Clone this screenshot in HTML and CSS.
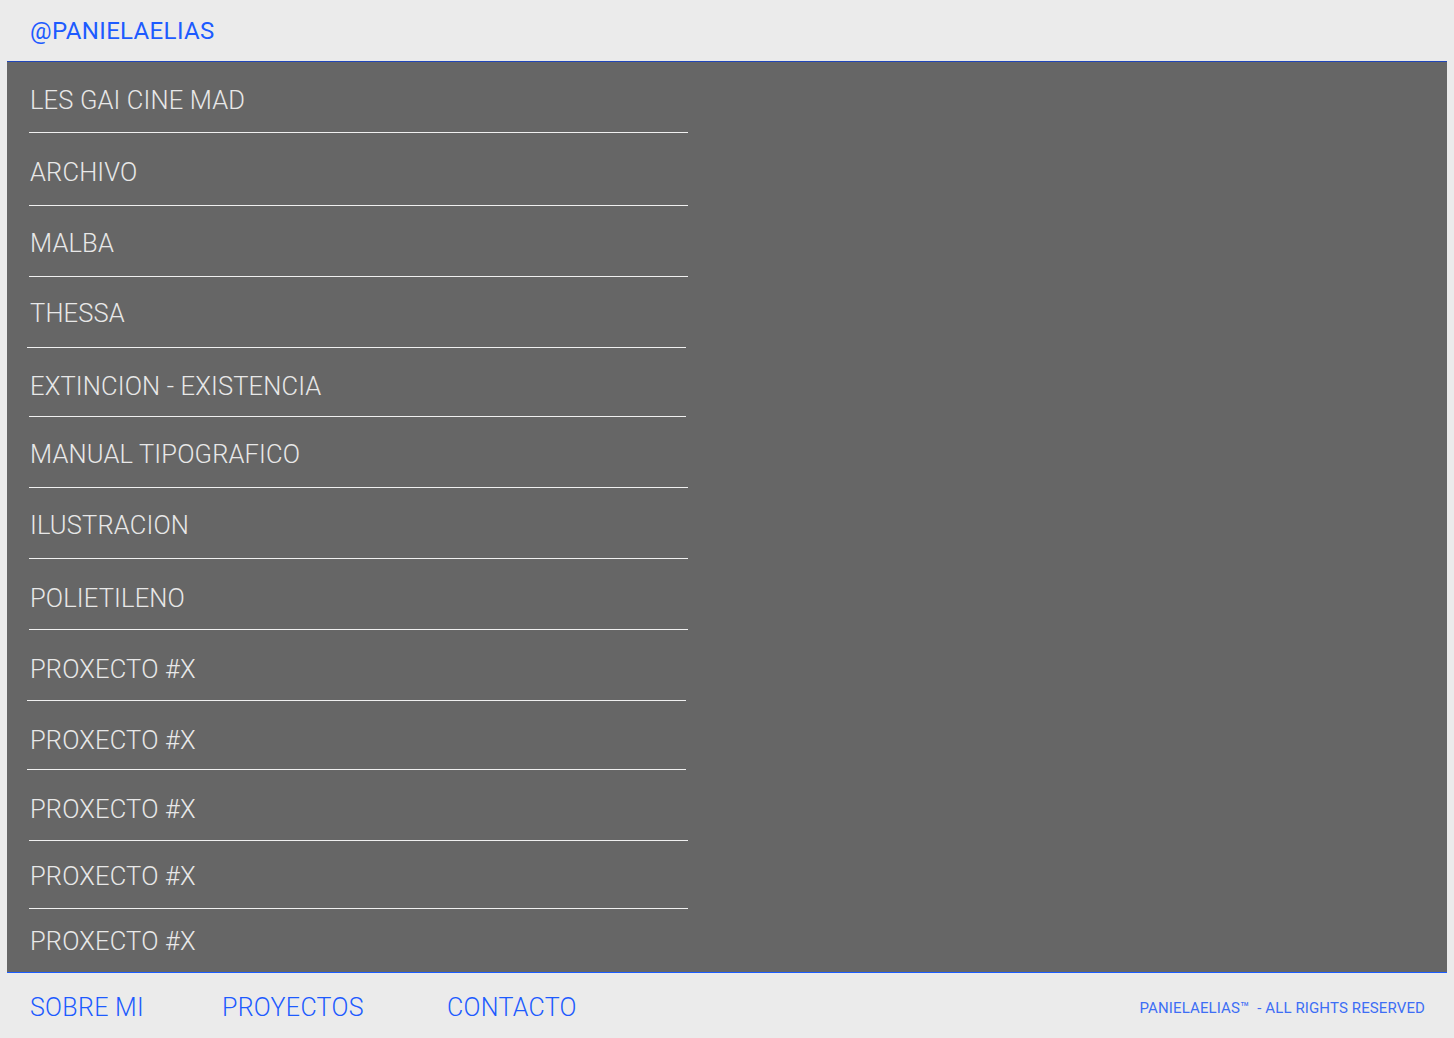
FILE: index.html
```html
<!DOCTYPE html>
<html lang="es">
<head>
<meta charset="utf-8">
<title>@PANIELAELIAS</title>
<link rel="stylesheet" href="styles.css">
</head>
<body>
<header class="top">
  <a class="handle" href="#">@PANIELAELIAS</a>
</header>
<main class="panel">
  <ul class="projects">
    <li class="row h70 up1">LES GAI CINE MAD</li>
    <li class="row h72">ARCHIVO</li>
    <li class="row h70 up2">MALBA</li>
    <li class="row h70 shift up3">THESSA</li>
    <li class="row h68 short up1">EXTINCION - EXISTENCIA</li>
    <li class="row h70 up2">MANUAL TIPOGRAFICO</li>
    <li class="row h70 up2">ILUSTRACION</li>
    <li class="row h70">POLIETILENO</li>
    <li class="row h70 shift">PROXECTO #X</li>
    <li class="row h68 shift">PROXECTO #X</li>
    <li class="row h70">PROXECTO #X</li>
    <li class="row h67 up4">PROXECTO #X</li>
    <li class="row h63 last up7">PROXECTO #X</li>
  </ul>
</main>
<footer class="bottom">
  <nav class="nav">
    <a class="nav-item" href="#">SOBRE MI</a>
    <a class="nav-item" href="#">PROYECTOS</a>
    <a class="nav-item" href="#">CONTACTO</a>
  </nav>
  <p class="rights">PANIELAELIAS™&nbsp; - ALL RIGHTS RESERVED</p>
</footer>
</body>
</html>
```
FILE: styles.css
```css
* { box-sizing: border-box; }

html, body {
  margin: 0;
  padding: 0;
}

body {
  background: #ebebeb;
  font-family: Roboto, "Liberation Sans", Arial, sans-serif;
  height: 1038px;
  overflow: hidden;
}

a { text-decoration: none; color: inherit; }

.top {
  height: 61px;
  padding: 16px 0 0 30px;
}

.handle {
  color: #1d5bff;
  font-size: 24px;
  line-height: 30px;
  font-weight: 400;
  letter-spacing: 0.35px;
  display: inline-block;
}

.panel {
  margin: 0 7px;
  background: #666666;
  border-top: 1px solid #2146b8;
  border-bottom: 1px solid #1a5cff;
  height: 912px;
}

.projects {
  list-style: none;
  margin: 0;
  padding: 0;
}

.row {
  margin-left: 22px;
  width: 659px;
  padding: 24px 0 0 1px;
  font-size: 25.5px;
  line-height: 30px;
  font-weight: 300;
  letter-spacing: 0.15px;
  color: #e8e8e8;
  border-bottom: 1px solid #f0f0f0;
}

.row.shift {
  margin-left: 20px;
  padding-left: 3px;
}

.row.short {
  width: 657px;
}

.row.last { border-bottom: none; }

.row.up1 { padding-top: 23px; }
.row.up2 { padding-top: 22px; }
.row.up3 { padding-top: 21px; }
.row.up4 { padding-top: 20px; }
.row.up7 { padding-top: 17px; }

.h67 { height: 68px; }
.h68 { height: 69px; }
.h70 { height: 71px; }
.h72 { height: 73px; }
.h63 { height: 63px; }

.bottom {
  height: 65px;
  display: flex;
  align-items: center;
  justify-content: space-between;
  padding: 4px 29px 0 30px;
}

.nav {
  display: grid;
  grid-template-columns: 192px 225px auto;
}

.nav-item {
  color: #1d5bff;
  font-size: 25px;
  line-height: 30px;
  font-weight: 300;
  letter-spacing: 0.3px;
}

.rights {
  margin: 0;
  color: #3d6ef5;
  font-size: 15px;
  line-height: 18px;
  letter-spacing: 0.12px;
}
```
